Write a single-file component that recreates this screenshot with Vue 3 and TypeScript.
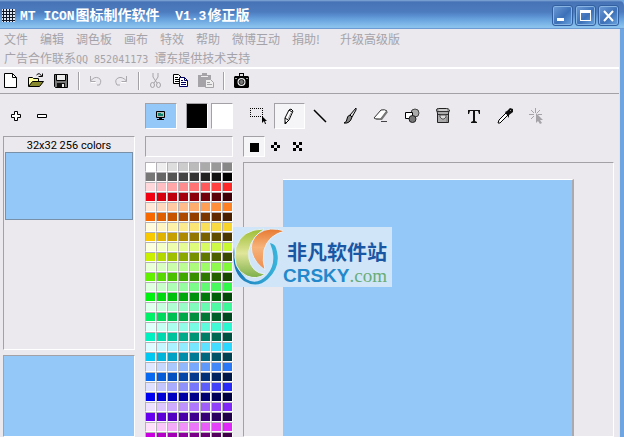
<script setup lang="ts">
import { ref } from 'vue'

interface Item { id: string; label: string; art: string }

const menus: string[] = ['文件', '编辑', '调色板', '画布', '特效', '帮助', '微博互动', '捐助!', '升级高级版']

const fileGroups: Item[][] = [
  [
    { id: 'new', label: '新建', art: '<path d="M2.500 1.500h8l4 4v10h-12z" fill="#fff" stroke="#000"/><path d="M10.500 1.500v4h4" fill="none" stroke="#000"/>' },
    { id: 'open', label: '打开', art: '<path d="M1.500 14V5.500h4l1 1h5v3" fill="#ffffa0" stroke="#000"/><path d="M1.500 14.500l4-5h11l-4 5z" fill="#88882c" stroke="#000"/><path d="M9.500 3q3-3 5 1M15.500 1.500v3h-4" fill="none" stroke="#000"/>' },
    { id: 'save', label: '保存', art: '<path d="M2.500 2.500h13v13h-12l-1-1z" fill="#777" stroke="#000"/><path d="M4.500 2.500h9v6h-9z" fill="#ececec" stroke="#000"/><path d="M5 11h8v4H5z" fill="#111"/><path d="M10 12h2v3h-2z" fill="#eee"/>' },
  ],
  [
    { id: 'undo', label: '撤销', art: '<path d="M3.500 4v5.500h5M3.500 9q4-5 8-3t1 7H10" fill="none" stroke="#aaa8ad"/><path d="M4 10.500h5" stroke="#fff"/>' },
    { id: 'redo', label: '重做', art: '<path d="M14.500 4v5.500h-5M14.500 9Q10 4 6 6t-1 7h3" fill="none" stroke="#aaa8ad"/><path d="M9 10.500h5" stroke="#fff"/>' },
  ],
  [
    { id: 'cut', label: '剪切', art: '<path d="M6 1v4l4 6M11 1v4l-4 6" fill="none" stroke="#a5a3a8"/><ellipse cx="5.500" cy="13" rx="2" ry="2.500" fill="none" stroke="#a5a3a8"/><ellipse cx="11.500" cy="13" rx="2" ry="2.500" fill="none" stroke="#a5a3a8"/>' },
    { id: 'copy', label: '复制', art: '<path d="M1.500 2.500h5l3 3v6h-8z" fill="#fff" stroke="#000"/><path d="M3 5.500h3M3 7.500h4M3 9.500h4" stroke="#000"/><path d="M7.500 5.500h5l3 3v6h-8z" fill="#fff" stroke="#000060"/><path d="M12.500 5.500v3h3M9 8.500h2M9 10.500h5M9 12.500h5" fill="none" stroke="#000060"/>' },
    { id: 'paste', label: '粘贴', art: '<path d="M1 3h4V1h5v2h4v12H1z" fill="#a5a3a8"/><path d="M4 4.500h7" stroke="#eee"/><path d="M8.500 7.500h5l3 3v5h-8z" fill="#eee" stroke="#a5a3a8"/><path d="M10 10.500h3M10 12.500h5" stroke="#a5a3a8"/>' },
  ],
  [
    { id: 'camera', label: '截图', art: '<path d="M7 4V1h5v3h4l1 1v10l-1 1H3l-1-1V5l1-1z" fill="#000"/><path d="M8 2h3v2H8z" fill="#ddd"/><circle cx="9.500" cy="10" r="4" fill="#eee"/><circle cx="9.500" cy="10" r="2.500" fill="#777" stroke="#222"/><path d="M3 6h2v1H3zM14 6h2v1h-2z" fill="#999"/>' },
  ],
]

const tools: Item[] = [
  { id: 'select', label: '选择', art: '<path d="M1 1.500h13M1 9.500h13M1.500 3v7M13.500 3v7" fill="none" stroke="#000" stroke-dasharray="1 1"/><path d="M13 9v7l2-2 1 3h1l-1-3h2z" fill="#000"/>' },
  { id: 'pencil', label: '铅笔', art: '<path d="M5 11L9 3l2-1 2 2-4 9-4 4zM5 11l3 2M9 3l3 2M5 15l2 1" fill="#fff" stroke="#000"/><path d="M8 12l3-6" stroke="#999"/>' },
  { id: 'line', label: '直线', art: '<path d="M3 3L15 15" stroke="#000" stroke-width="1.500"/>' },
  { id: 'brush', label: '画笔', art: '<path d="M14 1L8 8l2 2 4-7z" fill="#ddd" stroke="#000"/><path d="M8 8Q5 9 5 12q0 3-3 4 6 1 8-6z" fill="#888" stroke="#000"/>' },
  { id: 'eraser', label: '橡皮', art: '<path d="M1 11l7-8q4-1 6 1l-6 8H3z" fill="#fff" stroke="#333"/><path d="M7 12l6-8 2 1-6 8H4l-2-2z" fill="#777"/><path d="M8 14.500h6" stroke="#444"/>' },
  { id: 'shapes', label: '形状', art: '<circle cx="11" cy="6" r="4" fill="#aaa" stroke="#444"/><path d="M1.500 5.500h7v6h-7z" fill="#fff" stroke="#000"/><circle cx="8.500" cy="12" r="3.500" fill="#777" stroke="#222"/>' },
  { id: 'fill', label: '填充', art: '<path d="M1.500 3q0-1.500 2-1.500h8q2 0 3 1.500l-1 3v9.500h-11V6z" fill="#aaa" stroke="#222"/><path d="M2 4.500h12M3 7.500h10" stroke="#333"/><path d="M4 3h8" stroke="#eee"/><path d="M5 8h6v2l-2 2H7l-2-2z" fill="#ddd" stroke="#555"/><path d="M12 10v5" stroke="#777"/>' },
  { id: 'text', label: '文字', art: '<path d="M2 3h12v4h-1l-1-3H9v10l2 1v1H5v-1l2-1V4H4L3 7H2z" fill="#111"/>' },
  { id: 'picker', label: '取色', art: '<path d="M1 16l1-3 7-7 2 2-8 8z" fill="#fff" stroke="#000"/><path d="M8 5l2-1 3-3 3 1v3l-4 3v3z" fill="#111"/><path d="M13 3l1 1" stroke="#999"/>' },
  { id: 'hotspot', label: '热点', art: '<path d="M7.500 1v5M1 7.500h5M3 3l3 3M12 3L9 6M3 12l3-3M10 7.500h4" stroke="#a5a3a8"/><path d="M8 6v10l2-2 2 3 2-1-2-3h3z" fill="#a5a3a8"/>' },
]

const shapes: Item[] = [
  { id: 'square', label: '方形', art: '<path d="M4 5h9v9H4z" fill="#000"/>' },
  { id: 'diamond', label: '菱形', art: '<path d="M6 4h3v3H6zM3 7h3v3H3zM9 7h3v3H9zM6 10h3v3H6z" fill="#000"/>' },
  { id: 'cross', label: '交叉', art: '<path d="M3 4h3v3H3zM9 4h3v3H9zM6 7h3v3H6zM3 10h3v3H3zM9 10h3v3H9z" fill="#000"/>' },
]

const ramps: [string, string][] = [
  ['ffffff', '888888'], ['777777', '000000'], ['ffd8dc', 'ff2828'], ['f00010', '400008'],
  ['ffe8d8', 'ff8020'], ['f86800', '482000'], ['fffbdc', 'f8d428'], ['f8c800', '483800'],
  ['fbffe0', 'c8f830'], ['c8f000', '384800'], ['e8ffd8', '80f838'], ['60f000', '184800'],
  ['e0ffe0', '30f848'], ['00f010', '004808'], ['e0ffec', '38f898'], ['00f068', '004820'],
  ['e0fffa', '28f8d0'], ['00f0c0', '005040'], ['e0fbff', '28d8ff'], ['00c8f0', '004050'],
  ['e0e8ff', '2878f8'], ['0868f0', '001848'], ['e0e0ff', '2828f8'], ['0000f0', '000040'],
  ['eee0ff', '8028f8'], ['6800f0', '200048'], ['ffe0fa', 'e028f8'], ['c800e0', '400048'],
]

function blend(from: string, to: string, step: number): string {
  const part = (hex: string, i: number): number => parseInt(hex.slice(i * 2, i * 2 + 2), 16)
  const rgb = [0, 1, 2].map(i => Math.round(part(from, i) + (part(to, i) - part(from, i)) * step / 7))
  return `rgb(${rgb.join(', ')})`
}

const swatches: string[] = ramps.flatMap(([a, b]) => Array.from({ length: 8 }, (_, i) => blend(a, b, i)))
const tool = ref('pencil')
const tip = ref('square')
const foreground = ref('#000')
</script>

<template>
  <div class="window">
    <header class="titlebar">
      <svg class="logo" width="13" height="13" viewBox="0 0 13 13" aria-hidden="true">
        <path d="M0 0h13v13H0z" fill="#dfe8f4" />
        <path d="M1.500 0v13M4.500 0v13M7.500 0v13M10.500 0v13M0 2.500h13M0 5.500h13M0 8.500h13M0 11.500h13" stroke="#101828" />
      </svg>
      <h1><span>MT ICON</span>图标制作软件<span>&nbsp; V1.3</span>修正版</h1>
      <div class="controls">
        <button aria-label="最小化"><svg width="19" height="19"><path d="M4 12h7v3H4z" fill="#fff" /></svg></button>
        <button aria-label="最大化"><svg width="19" height="19"><path d="M4 4h11v11H4zM5 7v7h9V7z" fill="#fff" fill-rule="evenodd" /></svg></button>
        <button aria-label="关闭"><svg width="19" height="19"><path d="M5 5l9 10M14 5L5 15" stroke="#fff" stroke-width="2" /></svg></button>
      </div>
    </header>

    <div class="frame">
      <nav class="menu">
        <button v-for="m in menus" :key="m">{{ m }}</button>
        <p>广告合作联系<span>QQ 852041173 </span>谭东提供技术支持</p>
      </nav>

      <div class="toolbar">
        <div v-for="(group, g) in fileGroups" :key="g" class="group">
          <button v-for="t in group" :key="t.id" :aria-label="t.label">
            <svg width="18" height="18" v-html="t.art" />
          </button>
        </div>
      </div>

      <main class="body">
        <section class="left">
          <div class="strip">
            <button class="small" aria-label="添加"><svg width="12" height="12"><path d="M4.500 1.500h3v3h3v3h-3v3h-3v-3h-3v-3h3z" fill="#fff" stroke="#000" /></svg></button>
            <button class="small" aria-label="删除"><svg width="12" height="12"><path d="M1.500 4.500h9v3h-9z" fill="#fff" stroke="#000" /></svg></button>
          </div>
          <div class="formats sunken">
            <button class="format"><span>32x32 256 colors</span><i></i></button>
          </div>
          <div class="preview sunken"></div>
        </section>

        <section class="colors">
          <div class="strip">
            <button class="screen sunken" aria-label="透明色">
              <svg width="10" height="10"><path d="M.5 .5h8v6h-8z" fill="#bbb" stroke="#000" /><path d="M2 2h5v3H2z" fill="#12806c" /><path d="M5 2h2v1H5z" fill="#76d4b4" /><path d="M3 7h3v1h2v1H1V8h2z" fill="#000" /></svg>
            </button>
            <button class="ink sunken" :style="{ background: foreground }" aria-label="前景色"></button>
            <button class="paper sunken" aria-label="背景色"></button>
          </div>
          <div class="current sunken"></div>
          <div class="swatches">
            <button v-for="(c, i) in swatches" :key="i" :style="{ background: c }" :aria-label="c" @click="foreground = c"></button>
          </div>
        </section>

        <section class="editor">
          <div class="strip">
            <button v-for="t in tools" :key="t.id" class="tool" :class="{ on: tool === t.id }" :aria-label="t.label" @click="tool = t.id">
              <svg width="18" height="18" v-html="t.art" />
            </button>
          </div>
          <div class="options">
            <button v-for="s in shapes" :key="s.id" :class="{ on: tip === s.id }" :aria-label="s.label" @click="tip = s.id">
              <svg width="17" height="17" v-html="s.art" />
            </button>
          </div>
          <div class="workspace sunken"><div class="canvas"></div></div>
        </section>
      </main>
    </div>

    <aside class="stamp">
      <svg width="50" height="60" viewBox="0 0 50 60" aria-hidden="true">
        <defs>
          <linearGradient id="leaf" x1="0" y1="0" x2="0" y2="1"><stop offset="0" stop-color="#9dbd35" /><stop offset=".5" stop-color="#e1e69a" /><stop offset="1" stop-color="#7daf4a" /></linearGradient>
          <linearGradient id="flame" x1="0" y1="0" x2="0" y2="1"><stop offset="0" stop-color="#e77931" /><stop offset=".45" stop-color="#f7b37a" /><stop offset="1" stop-color="#ee8b4b" /></linearGradient>
          <linearGradient id="wave" x1="0" y1="0" x2="1" y2="0"><stop offset="0" stop-color="#1876b8" /><stop offset="1" stop-color="#39b5dc" /></linearGradient>
        </defs>
        <path d="M1 20Q-2 45 11 54q13 8 24-2 14-13 8-31-1-4-6-5 8 19-3 32-10 11-21 4Q2 42 1 20z" fill="url(#wave)" />
        <path d="M31 2Q9 2 3 20q-5 22 11 29 10 4 18-2-13-1-16-15Q13 15 31 2z" fill="url(#leaf)" stroke="#e4eff6" />
        <path d="M52 4Q36-1 26 6 16 14 19 26q3 10 13 17-3-9-1-20Q35 8 52 4z" fill="url(#flame)" stroke="#e4eff6" />
      </svg>
      <div class="words">
        <b>非凡软件站</b>
        <div class="site"><strong>CRSKY</strong><em>.com</em></div>
      </div>
    </aside>
  </div>
</template>

<style>
body { margin: 0; overflow: hidden; }
</style>

<style scoped>
* { box-sizing: border-box; }
button { margin: 0; padding: 0; border: 0; background: none; font: inherit; color: inherit; display: flex; align-items: center; justify-content: center; flex: none; }
svg { display: block; flex: none; }
.window { position: relative; height: 100vh; display: flex; flex-direction: column; overflow: hidden; background: #6fa6e2; font-family: "Liberation Sans", "Noto Sans CJK SC", sans-serif; }
.titlebar { height: 29px; flex: none; display: flex; align-items: center; padding: 2px 5px 0 2px; border-bottom: 1px solid #6b9bd2; border-top-right-radius: 6px; background: linear-gradient(#86abd9 0, #4673b5 2px, #4d7cbe 12px, #568bcd 15px, #6ba5df 20px, #8bc2ed 27px); }
h1 { flex: 1; margin: 0 0 0 5px; font: bold 14px/20px "Noto Sans CJK SC", sans-serif; color: #fff; white-space: nowrap; }
h1 span { font: bold 13px/20px "Liberation Mono", monospace; padding-right: 1px; }
.controls { display: flex; gap: 2px; }
.controls button { width: 21px; height: 21px; border: 1px solid #315f9f; border-radius: 3px; background: linear-gradient(135deg, #6d9bd6, #3c70b8 55%, #6aa5e0); box-shadow: inset 0 0 0 1px #88b4e3; }
.frame { flex: 1; min-height: 0; margin-right: 4px; display: flex; flex-direction: column; background: #ebe9ed; border-right: 1px solid #dbe6f3; }
.menu { flex: none; display: flex; flex-wrap: wrap; column-gap: 12px; padding: 0 4px; height: 38px; font: 12px/19px "Noto Sans CJK SC", sans-serif; color: #a5a3a9; }
.menu button { height: 19px; }
.menu button:last-of-type { margin-left: 8px; }
.menu p { margin: 0; width: 100%; height: 19px; }
.menu p span { font: 10px/18px "DejaVu Sans Mono", monospace; white-space: pre; }
.toolbar { flex: none; height: 27px; display: flex; align-items: center; border-top: 2px solid #fff; border-bottom: 1px solid #a3a1a6; padding-left: 2px; }
.group { display: flex; gap: 7px; padding-right: 8px; }
.group + .group { border-left: 1px solid #a3a1a6; box-shadow: inset 1px 0 #fff; padding-left: 8px; }
.body { flex: 1; min-height: 0; display: flex; gap: 10px; padding: 9px 5px 0 3px; }
.sunken { border: 1px solid; border-color: #a3a1a6 #fff #fff #a3a1a6; }
.left, .colors, .editor { display: flex; flex-direction: column; min-height: 0; }
.left { width: 132px; flex: none; }
.colors { width: 88px; flex: none; }
.editor { flex: 1; min-width: 0; }
.strip { height: 26px; flex: none; margin-bottom: 7px; display: flex; }
.small { width: 26px; }
.formats { height: 214px; flex: none; padding: 2px 1px; }
.format { width: 100%; flex-direction: column; font: 11px/13px Roboto, sans-serif; color: #000; }
.format i { width: 100%; height: 68px; background: #94c8f8; border: 1px solid #7890a8; }
.preview { flex: 1; margin-top: 5px; background: #94c8f8; }
.screen { width: 32px; margin-right: 9px; background: #94c8f8; }
.ink { width: 22px; margin-right: 3px; }
.paper { width: 22px; background: #fff; }
.current { height: 21px; flex: none; margin-bottom: 5px; }
.swatches { display: grid; grid-template-columns: repeat(8, 1fr); grid-auto-rows: 10px; overflow: hidden; }
.swatches button { border: 1px solid; border-color: #b4b2b7 #fff #fff #b4b2b7; }
.tool { width: 31px; }
.tool svg { margin-right: 1px; }
.on { border: 1px solid; border-color: #a3a1a6 #fff #fff #a3a1a6; background: #f5f4f6; }
.options { display: flex; height: 21px; flex: none; margin-bottom: 5px; }
.options button { width: 22px; }
.workspace { flex: 1; display: flex; padding: 16px 39px 0; }
.canvas { flex: 1; background: #94c8f8; border-top: 1px solid #fff; border-right: 2px solid #aaa9ad; }
.stamp { position: absolute; left: 233px; top: 227px; width: 159px; height: 60px; display: flex; background: #d0e5f7; overflow: hidden; }
.words { display: flex; flex-direction: column; padding-top: 10px; white-space: nowrap; }
.words b { margin-left: 4px; font: bold 20px/30px "Noto Sans CJK SC", sans-serif; color: #1957a4; }
.site { display: flex; align-items: baseline; line-height: 18px; }
.site strong { font: bold 19px/18px "Liberation Sans", sans-serif; color: #2389cb; }
.site em { font: 19px/18px "Liberation Serif", serif; color: #68ad78; }
</style>
